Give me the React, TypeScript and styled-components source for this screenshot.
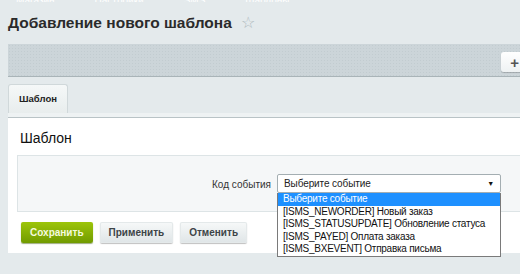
import React from 'react';
import styled, {createGlobalStyle} from 'styled-components';

const GlobalStyle = createGlobalStyle`
  html, body {
    margin: 0;
    padding: 0;
    width: 520px;
    height: 274px;
    overflow: hidden;
    background: #e4eaec;
    font-family: "Liberation Sans", Arial, sans-serif;
  }
`;

const Page = styled.div`
  position: relative;
  width: 520px;
  height: 274px;
  padding-left: 8px;
  box-sizing: border-box;
`;

const Crumbs = styled.div`
  height: 2px;
  overflow: hidden;
  display: flex;
  gap: 40px;
  padding-left: 8px;
  font-size: 10px;
  line-height: 2px;
  color: #fff;
`;

const TitleRow = styled.h1`
  display: flex;
  align-items: center;
  gap: 9px;
  margin: 0;
  height: 42px;
  font-size: 15.5px;
  font-weight: bold;
  color: #2b2b2b;
`;

const Star = styled.span`
  font-size: 16px;
  color: #aeb9bd;
  font-weight: normal;
  margin-top: -2px;
`;

const Toolbar = styled.div`
  height: 32px;
  background-color: #ccd5d9;
  background-image: radial-gradient(#c2ccd0 0.6px, transparent 0.7px);
  background-size: 3px 3px;
  border-bottom: 1px solid #a9b4b8;
  display: flex;
  justify-content: flex-end;
  align-items: center;
`;

const AddButton = styled.div`
  width: 18px;
  height: 20px;
  background: linear-gradient(#ffffff, #eef2f3);
  border-radius: 3px 0 0 3px;
  box-shadow: 0 1px 1px rgba(0, 0, 0, 0.2);
  display: flex;
  align-items: center;
  justify-content: flex-end;
  padding-right: 1px;
  font-size: 15px;
  font-weight: bold;
  color: #555;
  margin-top: 4px;
`;

const TabStrip = styled.div`
  height: 40px;
  display: flex;
  align-items: flex-end;
  padding-top: 7px;
  box-sizing: border-box;
  border-bottom: 4px solid #eef2f3;
  box-shadow: 0 1px 0 #b9c3c6;
`;

const Tab = styled.div`
  width: 60px;
  height: 29px;
  box-sizing: border-box;
  background: linear-gradient(#f5f8f8, #e8eded);
  border: 1px solid #d0d8da;
  border-bottom: none;
  border-radius: 3px 3px 0 0;
  display: flex;
  align-items: center;
  justify-content: center;
  font-size: 9.5px;
  font-weight: bold;
  color: #222;
  padding-bottom: 1px;
`;

const Panel = styled.div`
  margin-top: 1px;
  background: #fff;
  height: 135px;
  padding-left: 9px;
  box-sizing: border-box;
`;

const PanelTitle = styled.div`
  font-size: 14px;
  color: #111;
  padding: 12px 0 0 3px;
  height: 37px;
  box-sizing: border-box;
`;

const FieldBox = styled.div`
  height: 57px;
  background: #f5f7f8;
  border: 1px solid #dde4e6;
  border-right: none;
  display: grid;
  grid-template-columns: 259px 224px;
  align-items: start;
  padding-top: 18px;
  box-sizing: border-box;
`;

const Label = styled.div`
  text-align: right;
  font-size: 10px;
  color: #333;
  padding: 5px 6px 0 0;
`;

const SelectWrap = styled.div`
  position: relative;
`;

const Select = styled.div`
  height: 19px;
  box-sizing: border-box;
  background: #fff;
  border: 1px solid #a4aeb2;
  border-radius: 2px;
  font-size: 10px;
  letter-spacing: -0.1px;
  color: #222;
  display: flex;
  align-items: center;
  justify-content: space-between;
  padding: 0 6px 0 6px;
`;

const Arrow = styled.span`
  font-size: 7px;
  color: #111;
`;

const DropList = styled.ul`
  position: absolute;
  top: 19px;
  left: 0;
  width: 224px;
  margin: 0;
  padding: 0;
  list-style: none;
  background: #fff;
  border: 1px solid #7a7a7a;
  border-top: none;
  box-sizing: border-box;
  z-index: 2;
`;

const Option = styled.li<{active?: boolean}>`
  height: 12.6px;
  line-height: 12.6px;
  font-size: 10px;
  letter-spacing: -0.25px;
  padding-left: 5px;
  color: ${p => (p.active ? '#fff' : '#111')};
  background: ${p => (p.active ? '#1e90ff' : 'transparent')};
  white-space: nowrap;
`;

const Buttons = styled.div`
  display: flex;
  gap: 7px;
  padding: 10px 0 0 4px;
`;

const Button = styled.div<{primary?: boolean}>`
  height: 21px;
  box-sizing: border-box;
  padding: 0 9px;
  display: flex;
  align-items: center;
  border-radius: 2px;
  font-size: 10px;
  font-weight: bold;
  color: ${p => (p.primary ? '#f4fadf' : '#3d4447')};
  background: ${p => (p.primary ? 'linear-gradient(#9dc50a, #719b00)' : 'linear-gradient(#f7f9f9, #dfe5e7)')};
  box-shadow: ${p => (p.primary ? '0 1px 1px rgba(60, 90, 0, 0.5)' : '0 1px 1px rgba(0, 0, 0, 0.25), inset 0 0 0 1px #e4e9ea')};
`;

const options = [
    '[ISMS_NEWORDER] Новый заказ',
    '[ISMS_STATUSUPDATE] Обновление статуса',
    '[ISMS_PAYED] Оплата заказа',
    '[ISMS_BXEVENT] Отправка письма',
];

export default function App() {
    return (
        <>
            <GlobalStyle/>
            <Page>
                <Crumbs>
                    <span>Магазин</span><span>Настройки</span><span>SMS</span><span>Шаблоны</span>
                </Crumbs>
                <TitleRow>
                    Добавление нового шаблона <Star>☆</Star>
                </TitleRow>
                <Toolbar>
                    <AddButton>+</AddButton>
                </Toolbar>
                <TabStrip>
                    <Tab>Шаблон</Tab>
                </TabStrip>
                <Panel>
                    <PanelTitle>Шаблон</PanelTitle>
                    <FieldBox>
                        <Label>Код события</Label>
                        <SelectWrap>
                            <Select>
                                Выберите событие
                                <Arrow>▼</Arrow>
                            </Select>
                            <DropList>
                                <Option active>Выберите событие</Option>
                                {options.map(o => (
                                    <Option key={o}>{o}</Option>
                                ))}
                            </DropList>
                        </SelectWrap>
                    </FieldBox>
                    <Buttons>
                        <Button primary>Сохранить</Button>
                        <Button>Применить</Button>
                        <Button>Отменить</Button>
                    </Buttons>
                </Panel>
            </Page>
        </>
    );
}
